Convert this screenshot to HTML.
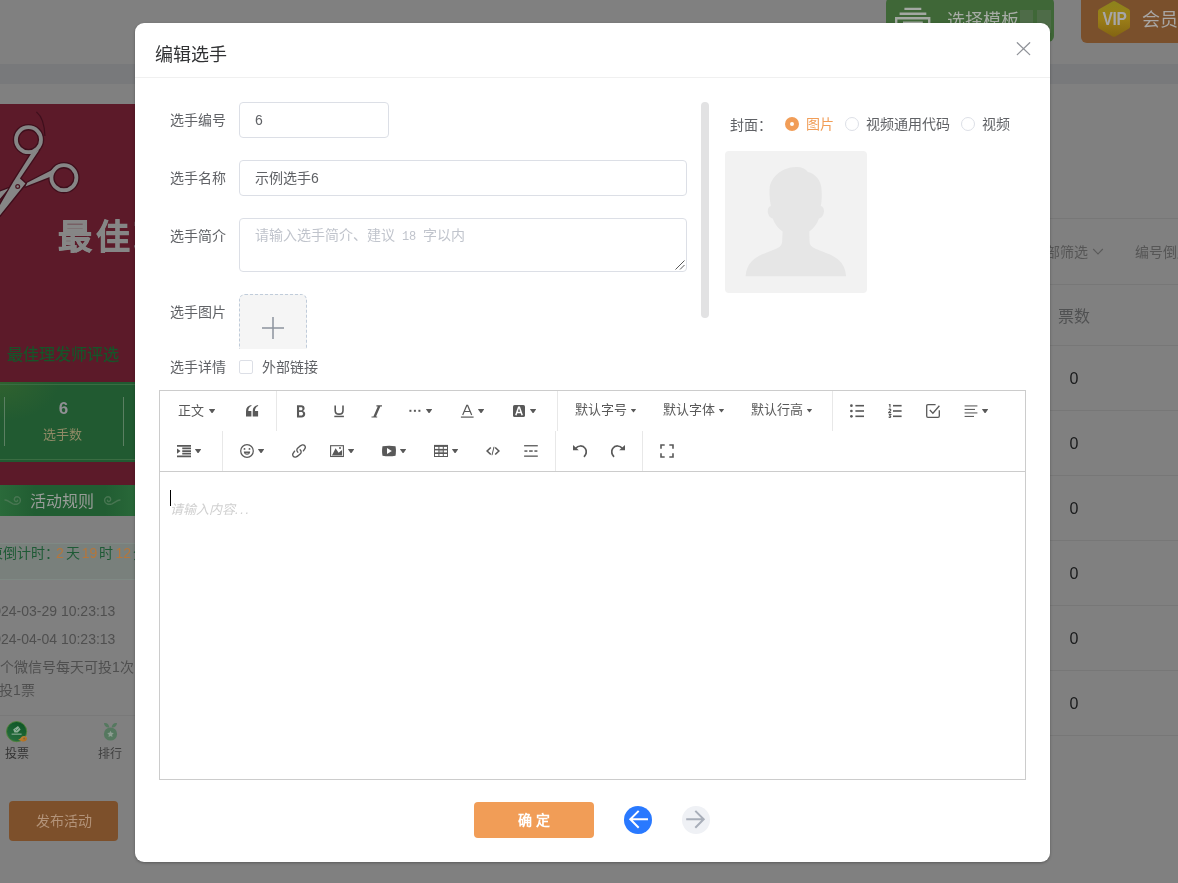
<!DOCTYPE html>
<html lang="zh-CN">
<head>
<meta charset="utf-8">
<title>编辑选手</title>
<style>
*{box-sizing:border-box;margin:0;padding:0}
html,body{width:1178px;height:883px;overflow:hidden;background:#808080;font-family:"Liberation Sans",sans-serif;}
.abs{position:absolute}
#bg{position:absolute;left:0;top:0;width:1178px;height:883px;overflow:hidden;background:#808080}
#bg div,#bg span,#bg svg{position:absolute}
.t{white-space:nowrap;line-height:1}
/* modal */
#modal{position:absolute;left:135px;top:23px;width:915px;height:839px;background:#fff;border-radius:9px;box-shadow:0 1px 3px rgba(0,0,0,.3)}
#modal div,#modal span,#modal svg{position:absolute}
.lbl{font-size:14px;color:#606266;white-space:nowrap;line-height:14px}
.inp{border:1px solid #dcdfe6;border-radius:4px;background:#fff}
.tbt{color:#595959}
</style>
</head>
<body>
<div id="bg"><div id="bgl" style="left:0;top:0;width:1178px;height:883px;will-change:transform">
<!-- BG-TOP -->
<div style="left:0;top:64px;width:1178px;height:20px;background:#78797b"></div>
<div style="left:886px;top:-3px;width:168px;height:45px;border-radius:6px;background:#3f6737"></div>
<svg style="left:892px;top:4px" width="42" height="30" viewBox="0 0 42 30"><path fill="none" stroke="#a3a8a2" stroke-width="2.4" d="M12.4 4.9 H29.3 M7.6 9.8 H34.3 M4.2 30 V14.3 H37.2 V30 M11 18.6 H30.8"/></svg>
<div class="t" style="left:947px;top:11.5px;font-size:18px;line-height:18px;color:#a7aca5">选择模板</div>
<div style="left:1019.5px;top:10px;width:13.3px;height:23px;background:#4e6c48"></div>
<div style="left:1037.4px;top:10px;width:13.4px;height:23px;background:#4e6c48"></div>
<div style="left:1081px;top:-10px;width:110px;height:53px;border-radius:6px;background:#7a502c"></div>
<svg style="left:1097px;top:0px" width="34" height="38" viewBox="0 0 34 38"><defs><linearGradient id="hx" x1="0" y1="0" x2="0" y2="1"><stop offset="0" stop-color="#8c831c"/><stop offset="0.5" stop-color="#9b7e18"/><stop offset="1" stop-color="#836412"/></linearGradient></defs><path fill="url(#hx)" d="M15.6 1.4 Q17 0.6 18.4 1.4 L31.6 9 Q33 9.8 33 11.4 V26.4 Q33 28 31.6 28.8 L18.4 36.4 Q17 37.2 15.6 36.4 L2.4 28.8 Q1 28 1 26.4 V11.4 Q1 9.8 2.4 9 Z"/></svg>
<div class="t" style="left:1100px;top:9.5px;width:29px;text-align:center;font-size:18px;line-height:18px;font-weight:bold;color:#a6a6a9;letter-spacing:-0.4px;transform:scaleX(.86)">VIP</div>
<div class="t" style="left:1142px;top:10.5px;font-size:18px;line-height:18px;color:#a8a6a4">会员</div>
<!-- /BG-TOP -->
<!-- BG-LEFT -->
<div style="left:0;top:104px;width:140px;height:412px;background:#5c1a29"></div>
<svg style="left:0;top:104px" width="140" height="130" viewBox="0 104 140 130">
 <path fill="none" stroke="#3e0f1c" stroke-width="1.2" d="M36.4 111.9 C41.5 116 44.5 122 44.9 136"/>
 <g fill="none" stroke="#3e0f1c" stroke-width="6.4" stroke-linejoin="round"><circle cx="28.5" cy="139.7" r="12.5"/><circle cx="63.9" cy="177.7" r="12.5"/></g>
 <path fill="#3e0f1c" stroke="#3e0f1c" stroke-width="2.6" stroke-linejoin="round" d="M31.1 153.8 L39.2 150 L19.9 178.4 L25.4 183.6 L-2 217.7 L-2 208.4 L13.6 181.4 Z M53 169.6 L51 176.5 L25.4 186.5 L27.2 182.8 Z M8.8 188.3 L-2 192.3 L-2 201.2 Z"/>
 <g fill="none" stroke="#868686" stroke-width="3.8"><circle cx="28.5" cy="139.7" r="12.5"/><circle cx="63.9" cy="177.7" r="12.5"/></g>
 <path fill="#868686" d="M53 169.6 L51 176.5 L25.4 186.5 L27.2 182.8 Z M8.8 188.3 L-2 192.3 L-2 201.2 Z"/>
 <path fill="#3e0f1c" stroke="#3e0f1c" stroke-width="2.2" stroke-linejoin="round" d="M19.9 178.4 L25.4 183.6 L-2 217.7 L-2 208.4 L13.6 181.4 Z"/>
 <path fill="#868686" d="M31.1 153.8 L39.2 150 L19.9 178.4 L25.4 183.6 L-2 217.7 L-2 208.4 L13.6 181.4 Z"/>
 <circle cx="17.7" cy="186.5" r="2.5" fill="#4a1421"/><circle cx="17.7" cy="186.5" r="1.2" fill="#868686"/>
</svg>
<div class="t" style="left:57.5px;top:217px;font-size:34px;line-height:40px;font-weight:900;color:#868686;letter-spacing:4px;-webkit-text-stroke:0.7px #868686">最佳理发师</div>
<div class="t" style="left:7px;top:347.4px;font-size:16px;line-height:16px;color:#17552a;-webkit-text-stroke:0.25px #17552a">最佳理发师评选</div>
<div style="left:0;top:382px;width:140px;height:80px;background:#215a31"></div>
<div style="left:0;top:382px;width:60px;height:40px;background:radial-gradient(ellipse at 0 0,#30622f 0,#215a31 70%)"></div>
<div style="left:0;top:384px;width:140px;height:1px;background:#3a6c42"></div>
<div style="left:0;top:459px;width:140px;height:1px;background:#3a6c42"></div>
<div style="left:4px;top:397px;width:1px;height:49px;background:#5b7f62"></div>
<div style="left:123px;top:397px;width:1px;height:49px;background:#5b7f62"></div>
<div class="t" style="left:33.5px;top:400px;width:60px;text-align:center;font-size:17px;line-height:18px;font-weight:bold;color:#909094">6</div>
<div class="t" style="left:32.7px;top:428.4px;width:60px;text-align:center;font-size:13px;line-height:14px;color:#8f8a66">选手数</div>
<div style="left:0;top:485px;width:140px;height:31.4px;background:linear-gradient(90deg,#2a6a3a 0,#215d32 25%,#215d32 75%,#2a6a3a 100%)"></div>
<div class="t" style="left:30px;top:494px;font-size:16px;line-height:16px;color:#999d99">活动规则</div>
<svg style="left:4px;top:494px" width="20" height="14" viewBox="0 0 20 14"><path fill="none" stroke="#487652" stroke-width="1.4" stroke-linecap="round" d="M1 6 C4 6 6 8.5 9 9.8 C12 11 16 10 16.4 7 C16.8 4 14 2 11.8 3 C9.8 4 9.8 6.6 11.6 7.4 C12.6 7.8 13.6 7.2 13.6 6.2"/></svg>
<svg style="left:101.2px;top:494px" width="20" height="14" viewBox="0 0 20 14"><path transform="translate(20 0) scale(-1 1)" fill="none" stroke="#487652" stroke-width="1.4" stroke-linecap="round" d="M1 6 C4 6 6 8.5 9 9.8 C12 11 16 10 16.4 7 C16.8 4 14 2 11.8 3 C9.8 4 9.8 6.6 11.6 7.4 C12.6 7.8 13.6 7.2 13.6 6.2"/></svg>
<div style="left:0;top:516px;width:140px;height:367px;background:#808080"></div>
<div style="left:0;top:543px;width:140px;height:37px;background:#79807c;border-top:1px solid #7f8984;border-bottom:1px solid #7f8984"></div>
<div class="t" style="left:-11px;top:546px;font-size:14px;line-height:15px;color:#1f5a36">束倒计时：<span style="position:static;color:#b4763c;margin-left:-3px">2</span><span style="position:static;margin:0 2px">天</span><span style="position:static;color:#b4763c">19</span><span style="position:static;margin:0 2px">时</span><span style="position:static;color:#b4763c">12</span><span style="position:static;margin:0 2px">分</span></div>
<div class="t" style="left:-14.6px;top:604px;font-size:14px;line-height:14px;color:#4f4f4f">2024-03-29 10:23:13</div>
<div class="t" style="left:-14.6px;top:632px;font-size:14px;line-height:14px;color:#4f4f4f">2024-04-04 10:23:13</div>
<div class="t" style="left:0px;top:660px;font-size:14px;line-height:14px;color:#4f4f4f">个微信号每天可投1次</div>
<div class="t" style="left:-1px;top:683px;font-size:14px;line-height:14px;color:#4f4f4f">投1票</div>
<div style="left:0;top:715px;width:140px;height:1px;background:#797979"></div>
<svg style="left:5px;top:720px" width="26" height="24" viewBox="0 0 26 24"><defs><linearGradient id="vg" x1="0.7" y1="0" x2="0.2" y2="1"><stop offset="0" stop-color="#0d5526"/><stop offset="1" stop-color="#2a7040"/></linearGradient><linearGradient id="og" x1="0" y1="0" x2="1" y2="1"><stop offset="0" stop-color="#c08a3c"/><stop offset="1" stop-color="#b06a1c"/></linearGradient></defs><circle cx="11.6" cy="11.6" r="10.1" fill="url(#vg)" stroke="#4f8238" stroke-width="0.9"/><path fill="#8fae98" d="M8.2 9.4 L13 6 L15.6 9.6 L12.6 12.6 H9.4 Z"/><path fill="none" stroke="#2e7a45" stroke-width="0.9" d="M10.4 9.4 L11.7 10.6 L13.6 8.4"/><rect x="6.6" y="13.6" width="10" height="1.1" fill="#8fae98"/><path fill="url(#og)" d="M13 19.6 C15 19.6 15.6 17.6 17 16.6 C19 15.2 22 16.2 22 18.6 C22 20.8 19.6 21.8 17.4 21.4 C15.4 21.2 14.6 20.2 13 19.6 Z"/><circle cx="19.2" cy="18.6" r="1" fill="#7d6a3a"/></svg>
<div class="t" style="left:5px;top:748px;font-size:12px;line-height:12px;color:#333">投票</div>
<svg style="left:102px;top:722px" width="17" height="19" viewBox="0 0 17 19"><path fill="#55785f" d="M2 1 C5 0.4 7 2.2 7.4 5.4 C4.4 5.8 2.2 4.2 2 1 Z M15 1 C12 0.4 10 2.2 9.6 5.4 C12.6 5.8 14.8 4.2 15 1 Z"/><circle cx="8.5" cy="12" r="6.6" fill="#55785f"/><path fill="#8c9d91" d="M8.5 8.7 L9.5 10.8 L11.8 11.1 L10.1 12.7 L10.5 15 L8.5 13.9 L6.5 15 L6.9 12.7 L5.2 11.1 L7.5 10.8 Z"/></svg>
<div class="t" style="left:98px;top:748px;font-size:12px;line-height:12px;color:#404040">排行</div>
<div style="left:9px;top:801px;width:109px;height:40px;border-radius:4px;background:#7d502b"></div>
<div class="t" style="left:9px;top:814px;width:109px;text-align:center;font-size:14px;line-height:14px;color:#b39379">发布活动</div>
<!-- /BG-LEFT -->
<!-- BG-RIGHT -->
<div style="left:1045px;top:218px;width:140px;height:1px;background:#777"></div>
<div style="left:1045px;top:284px;width:140px;height:1px;background:#777"></div>
<div style="left:1045px;top:345px;width:140px;height:1px;background:#777"></div>
<div style="left:1045px;top:410px;width:140px;height:1px;background:#777"></div>
<div style="left:1045px;top:475px;width:140px;height:1px;background:#777"></div>
<div style="left:1045px;top:540px;width:140px;height:1px;background:#777"></div>
<div style="left:1045px;top:605px;width:140px;height:1px;background:#777"></div>
<div style="left:1045px;top:670px;width:140px;height:1px;background:#777"></div>
<div style="left:1045px;top:735px;width:140px;height:1px;background:#777"></div>
<div class="t" style="left:1069.5px;top:371px;font-size:16px;line-height:16px;color:#191a1b">0</div>
<div class="t" style="left:1069.5px;top:436px;font-size:16px;line-height:16px;color:#191a1b">0</div>
<div class="t" style="left:1069.5px;top:501px;font-size:16px;line-height:16px;color:#191a1b">0</div>
<div class="t" style="left:1069.5px;top:566px;font-size:16px;line-height:16px;color:#191a1b">0</div>
<div class="t" style="left:1069.5px;top:631px;font-size:16px;line-height:16px;color:#191a1b">0</div>
<div class="t" style="left:1069.5px;top:696px;font-size:16px;line-height:16px;color:#191a1b">0</div>
<div class="t" style="left:1046px;top:245px;font-size:14px;line-height:14px;color:#565656">部筛选</div>
<svg style="left:1092px;top:247px" width="12" height="9" viewBox="0 0 12 9"><path fill="none" stroke="#5a5a5a" stroke-width="1.1" d="M1.2 2 L6 7 L10.8 2"/></svg>
<div class="t" style="left:1135px;top:245px;font-size:14px;line-height:14px;color:#565656">编号倒序</div>
<div class="t" style="left:1058px;top:309px;font-size:16px;line-height:16px;color:#505152">票数</div>
<!-- /BG-RIGHT -->
</div></div>
<div id="modal"><div id="mdl" style="left:0;top:0;width:915px;height:839px;will-change:transform">
<!-- HEADER -->
<div class="t" style="left:20px;top:23px;font-size:18px;line-height:18px;color:#303133">编辑选手</div>
<div style="left:0;top:54px;width:915px;height:1px;background:#f0f0f0"></div>
<svg style="left:881px;top:18px" width="16" height="16" viewBox="0 0 16 16"><path d="M1.3 1.7 L13.7 13.6 M13.7 1.7 L1.3 13.6" stroke="#909399" stroke-width="1.3" fill="none" stroke-linecap="round"/></svg>
<!-- FORM -->
<div id="scrollbox" style="left:24px;top:72px;width:560px;height:254px;overflow:hidden">
  <div class="lbl" style="left:11px;top:18px">选手编号</div>
  <div class="inp" style="left:80px;top:7px;width:150px;height:36px"></div>
  <div class="lbl" style="left:96px;top:18px">6</div>
  <div class="lbl" style="left:11px;top:76px">选手名称</div>
  <div class="inp" style="left:80px;top:65px;width:448px;height:36px"></div>
  <div class="lbl" style="left:96px;top:76px">示例选手6</div>
  <div class="lbl" style="left:11px;top:134px">选手简介</div>
  <div class="inp" style="left:80px;top:123px;width:448px;height:54px"></div>
  <div class="lbl" style="left:96px;top:133px;color:#c0c4cc">请输入选手简介、建议<span style="position:static;font-family:'Liberation Mono',monospace;font-size:12px;letter-spacing:-0.2px;white-space:pre"> 18 </span>字以内</div>
  <svg style="left:515px;top:164px" width="11" height="11" viewBox="0 0 11 11"><path d="M1.5 10.5 L10.5 1.5 M6 10.5 L10.5 6" stroke="#5a5a5a" stroke-width="1" fill="none"/></svg>
  <div class="lbl" style="left:11px;top:210px">选手图片</div>
  <div style="left:80px;top:199px;width:68px;height:68px;border:1px dashed #c0ccda;border-radius:6px;background:#f5f5f5"></div>
  <svg style="left:102px;top:221px" width="24" height="24" viewBox="0 0 24 24"><path d="M12 1 V23 M1 12 H23" stroke="#8c939d" stroke-width="1.5" fill="none"/></svg>
</div>
<div style="left:566px;top:79px;width:8px;height:216px;border-radius:4px;background:#e2e2e3"></div>
<div class="lbl" style="left:35px;top:337px">选手详情</div>
<div style="left:104px;top:337px;width:14px;height:14px;border:1px solid #dcdfe6;border-radius:2px;background:#fff"></div>
<div class="lbl" style="left:127px;top:337px">外部链接</div>
<!-- COVER -->
<div class="lbl" style="left:595px;top:95px">封面：</div>
<div style="left:650px;top:94px;width:14px;height:14px;border-radius:50%;background:#f19d57"></div>
<div style="left:655px;top:99px;width:4px;height:4px;border-radius:50%;background:#fff"></div>
<div class="lbl" style="left:671px;top:94px;color:#f19d57">图片</div>
<div style="left:710px;top:94px;width:14px;height:14px;border-radius:50%;border:1px solid #dcdfe6;background:#fff"></div>
<div class="lbl" style="left:731px;top:94px">视频通用代码</div>
<div style="left:826px;top:94px;width:14px;height:14px;border-radius:50%;border:1px solid #dcdfe6;background:#fff"></div>
<div class="lbl" style="left:847px;top:94px">视频</div>
<div style="left:590px;top:128px;width:142px;height:142px;border-radius:4px;background:#f2f2f2;overflow:hidden">
<svg style="left:0;top:0" width="142" height="142" viewBox="0 0 142 142"><path fill="#e6e6e6" d="M70.9 16.1 C76 15.8 80 17.5 82.9 21 C90 22.5 96 29 96.5 38 C97 44 96.8 50 95.8 55 C98.5 55.5 99.6 59 98.6 62.5 C97.8 65.5 96 67.2 94 67.5 C92 73 88.5 77.5 84.3 80.5 L84.5 90 C84.6 94 86.5 96 90 97.5 C98 101 107 103.5 112.5 108 C118 112.5 120.5 118 121.1 125.3 L20.6 125.3 C21.2 118 23.7 112.5 29.2 108 C34.7 103.5 43.7 101 51.7 97.5 C55.2 96 57.1 94 57.2 90 L57.6 80.5 C53.2 77.5 49.7 73 47.7 67.5 C45.7 67.2 43.9 65.5 43.1 62.5 C42.1 59 43.2 55.5 45.9 55 C44.9 50 44.2 44 44.6 38 C45.2 27 56 16.5 70.9 16.1 Z"/></svg>
</div>
<!-- EDITOR -->
<div style="left:24px;top:367px;width:867px;height:390px;border:1px solid #ccc;background:#fff"></div>
<div style="left:25px;top:448px;width:865px;height:1px;background:#ccc"></div>
<div class="t tbt" style="left:43px;top:380.5px;font-size:13px;line-height:14px">正文</div>
<svg style="left:73.90px;top:386.00px" width="6.20" height="4.40" viewBox="0 0 62 44"><path fill="#595959" d="M4 0 H58 Q64 0 60.5 5 L34 42 Q31 46 28 42 L1.5 5 Q-2 0 4 0 Z"/></svg>
<svg style="left:110px;top:381px" width="14" height="14" viewBox="0 0 14 14"><path fill="#595959" d="M1 12.6 V7.4 C1 3.8 2.9 1.6 6.4 1.1 V2 C4.2 2.9 3.3 4.7 3.3 7 H6.4 V12.6 Z M7.7 12.6 V7.4 C7.7 3.8 9.6 1.6 13.1 1.1 V2 C10.9 2.9 10 4.7 10 7 H13.1 V12.6 Z"/></svg>
<div style="left:141px;top:368px;width:1px;height:40px;background:#e8e8e8"></div>
<svg style="left:159px;top:381px" width="14" height="14" viewBox="0 0 14 14"><path transform="translate(0.85 0) scale(0.885 1)" fill="#595959" fill-rule="evenodd" d="M2.4 1.3 H7 C9.6 1.3 11 2.4 11 4.3 C11 5.7 10.2 6.6 9 6.95 C10.7 7.3 11.7 8.4 11.7 10 C11.7 12.2 10.1 13.5 7.4 13.5 H2.4 Z M4.8 3.2 V6.2 H6.8 C8 6.2 8.6 5.65 8.6 4.65 C8.6 3.65 8 3.2 6.7 3.2 Z M4.8 8 V11.6 H7.1 C8.5 11.6 9.2 10.95 9.2 9.8 C9.2 8.65 8.5 8 7 8 Z"/></svg>
<svg style="left:197px;top:381px" width="14" height="14" viewBox="0 0 14 14"><path fill="none" stroke="#595959" stroke-width="1.6" d="M3.2 1.4 V6.4 C3.2 8.8 4.7 10.1 7.1 10.1 C9.5 10.1 11 8.8 11 6.4 V1.4"/><rect x="2.3" y="11.7" width="9.6" height="1.5" fill="#595959"/></svg>
<svg style="left:235px;top:381px" width="14" height="14" viewBox="0 0 14 14"><path fill="#595959" d="M6.4 1.3 H12 V2.4 H10.35 L6.0 12.4 H7.2 V13.5 H1.5 V12.4 H3.4 L7.75 2.4 H6.4 Z"/></svg>
<svg style="left:273px;top:381px" width="14" height="14" viewBox="0 0 14 14"><rect x="1.4" y="5.8" width="2" height="2" fill="#595959"/><rect x="5.9" y="5.8" width="2" height="2" fill="#595959"/><rect x="10.4" y="5.8" width="2" height="2" fill="#595959"/></svg>
<svg style="left:290.90px;top:386.00px" width="6.20" height="4.40" viewBox="0 0 62 44"><path fill="#595959" d="M4 0 H58 Q64 0 60.5 5 L34 42 Q31 46 28 42 L1.5 5 Q-2 0 4 0 Z"/></svg>
<svg style="left:325px;top:381px" width="14" height="14" viewBox="0 0 14 14"><path fill="none" stroke="#595959" stroke-width="1.2" d="M2.7 10.9 L6.75 1.4 H7.65 L11.7 10.9 M4.2 7.5 H10.2"/><rect x="0.9" y="12.5" width="12.7" height="1.2" fill="#595959"/></svg>
<svg style="left:342.90px;top:386.00px" width="6.20" height="4.40" viewBox="0 0 62 44"><path fill="#595959" d="M4 0 H58 Q64 0 60.5 5 L34 42 Q31 46 28 42 L1.5 5 Q-2 0 4 0 Z"/></svg>
<svg style="left:377px;top:381px" width="14" height="14" viewBox="0 0 14 14"><rect x="1" y="1" width="12" height="12" rx="1.6" fill="#595959"/><path fill="none" stroke="#fff" stroke-width="1.5" d="M3.8 11.2 L6.6 3.2 H7.4 L10.2 11.2 M4.9 8.4 H9.1"/></svg>
<svg style="left:394.90px;top:386.00px" width="6.20" height="4.40" viewBox="0 0 62 44"><path fill="#595959" d="M4 0 H58 Q64 0 60.5 5 L34 42 Q31 46 28 42 L1.5 5 Q-2 0 4 0 Z"/></svg>
<div style="left:422px;top:368px;width:1px;height:40px;background:#e8e8e8"></div>
<div class="t tbt" style="left:440px;top:380.2px;font-size:13px;line-height:14px">默认字号</div>
<svg style="left:496.02px;top:386.34px" width="4.96" height="3.52" viewBox="0 0 62 44"><path fill="#595959" d="M4 0 H58 Q64 0 60.5 5 L34 42 Q31 46 28 42 L1.5 5 Q-2 0 4 0 Z"/></svg>
<div class="t tbt" style="left:528px;top:380.2px;font-size:13px;line-height:14px">默认字体</div>
<svg style="left:584.22px;top:386.34px" width="4.96" height="3.52" viewBox="0 0 62 44"><path fill="#595959" d="M4 0 H58 Q64 0 60.5 5 L34 42 Q31 46 28 42 L1.5 5 Q-2 0 4 0 Z"/></svg>
<div class="t tbt" style="left:616px;top:380.2px;font-size:13px;line-height:14px">默认行高</div>
<svg style="left:672.12px;top:386.34px" width="4.96" height="3.52" viewBox="0 0 62 44"><path fill="#595959" d="M4 0 H58 Q64 0 60.5 5 L34 42 Q31 46 28 42 L1.5 5 Q-2 0 4 0 Z"/></svg>
<div style="left:697px;top:368px;width:1px;height:40px;background:#e8e8e8"></div>
<svg style="left:715px;top:381px" width="14" height="14" viewBox="0 0 14 14"><circle cx="1.4" cy="1.7" r="1.35" fill="#595959"/><rect x="5.4" y="0.8999999999999999" width="8.6" height="1.6" fill="#595959"/><circle cx="1.4" cy="7" r="1.35" fill="#595959"/><rect x="5.4" y="6.2" width="8.6" height="1.6" fill="#595959"/><circle cx="1.4" cy="12.3" r="1.35" fill="#595959"/><rect x="5.4" y="11.5" width="8.6" height="1.6" fill="#595959"/></svg>
<svg style="left:753px;top:381px" width="14" height="14" viewBox="0 0 14 14"><rect x="5" y="0.8999999999999999" width="8.6" height="1.6" fill="#595959"/><rect x="5" y="6.2" width="8.6" height="1.6" fill="#595959"/><rect x="5" y="11.5" width="8.6" height="1.6" fill="#595959"/><path fill="none" stroke="#595959" stroke-width="1.1" d="M0.9 0.9 L2 0.4 V3.6 M0.7 5.6 C1.3 4.8 3 5 2.8 6.2 C2.7 7 1.2 7.6 0.7 8.6 H3.1 M0.8 10.5 H2.8 L1.6 12 C3.2 12 3.3 13.9 0.7 13.5"/></svg>
<svg style="left:791px;top:381px" width="14" height="14" viewBox="0 0 14 14"><path fill="none" stroke="#595959" stroke-width="1.3" d="M9.6 0.7 H2 Q0.7 0.7 0.7 2 V12 Q0.7 13.3 2 13.3 H12 Q13.3 13.3 13.3 12 V6.2"/><path fill="none" stroke="#595959" stroke-width="1.3" d="M3.8 6 L6.9 9.2 L13.4 1.8"/></svg>
<svg style="left:829px;top:381px" width="14" height="14" viewBox="0 0 14 14"><rect x="0.6" y="1.4" width="12.8" height="1.05" fill="#595959"/><rect x="0.6" y="4.9" width="10.4" height="1.05" fill="#595959"/><rect x="0.6" y="8.4" width="12.8" height="1.05" fill="#595959"/><rect x="0.6" y="11.9" width="9.4" height="1.05" fill="#595959"/></svg>
<svg style="left:846.90px;top:386.00px" width="6.20" height="4.40" viewBox="0 0 62 44"><path fill="#595959" d="M4 0 H58 Q64 0 60.5 5 L34 42 Q31 46 28 42 L1.5 5 Q-2 0 4 0 Z"/></svg>
<svg style="left:42px;top:421px" width="14" height="14" viewBox="0 0 16 16"><path fill="#595959" d="M0 1h16v2h-16zM6 4h10v2h-10zM6 7h10v2h-10zM6 10h10v2h-10zM0 13h16v2h-16zM0 11v-6l4 3z"/></svg>
<svg style="left:59.90px;top:426.00px" width="6.20" height="4.40" viewBox="0 0 62 44"><path fill="#595959" d="M4 0 H58 Q64 0 60.5 5 L34 42 Q31 46 28 42 L1.5 5 Q-2 0 4 0 Z"/></svg>
<div style="left:87px;top:408px;width:1px;height:40px;background:#e8e8e8"></div>
<svg style="left:105px;top:421px" width="14" height="14" viewBox="0 0 14 14"><circle cx="7" cy="7" r="6.3" fill="none" stroke="#595959" stroke-width="1.25"/><circle cx="4.5" cy="4.9" r="0.95" fill="#595959"/><circle cx="9.5" cy="4.9" r="0.95" fill="#595959"/><path fill="#595959" d="M3.8 7.4 H10.2 C10.2 9.4 8.8 10.7 7 10.7 C5.2 10.7 3.8 9.4 3.8 7.4 Z"/><ellipse cx="7" cy="9.5" rx="1.7" ry="0.8" fill="#a0a0a0"/></svg>
<svg style="left:122.90px;top:426.00px" width="6.20" height="4.40" viewBox="0 0 62 44"><path fill="#595959" d="M4 0 H58 Q64 0 60.5 5 L34 42 Q31 46 28 42 L1.5 5 Q-2 0 4 0 Z"/></svg>
<svg style="left:157px;top:421px" width="14" height="14" viewBox="0 0 14 14"><g fill="none" stroke="#595959" stroke-width="1.35" stroke-linecap="round"><path d="M11.4 6.9 L12.9 4.6 C14 2.9 12.6 0.4 10.3 0.9 C9.4 1.1 6.5 3.4 5.6 4.3 C4.5 5.4 4.6 7.2 5.9 8.2"/><path d="M2.6 7.1 L1.1 9.4 C0 11.1 1.4 13.6 3.7 13.1 C4.6 12.9 7.5 10.6 8.4 9.7 C9.5 8.6 9.4 6.8 8.1 5.8"/></g></svg>
<svg style="left:195px;top:421px" width="14" height="14" viewBox="0 0 14 14"><rect x="0.6" y="1.7" width="12.8" height="10.8" fill="none" stroke="#595959" stroke-width="1.1"/><path fill="#595959" d="M1.9 11.4 L5.6 4.2 L8.6 8.7 L11.6 6.3 L12 6.6 V11.4 Z"/><circle cx="10" cy="4.1" r="1" fill="#595959"/></svg>
<svg style="left:212.90px;top:426.00px" width="6.20" height="4.40" viewBox="0 0 62 44"><path fill="#595959" d="M4 0 H58 Q64 0 60.5 5 L34 42 Q31 46 28 42 L1.5 5 Q-2 0 4 0 Z"/></svg>
<svg style="left:247px;top:421px" width="14" height="14" viewBox="0 0 14 14"><path fill="#595959" d="M0.5 2.3 Q7 1.3 13.5 2.3 Q14.4 7 13.5 11.7 Q7 12.7 0.5 11.7 Q-0.4 7 0.5 2.3 Z"/><path fill="#fff" d="M5 3.9 L9.8 7 L5 10.1 Z"/></svg>
<svg style="left:264.90px;top:426.00px" width="6.20" height="4.40" viewBox="0 0 62 44"><path fill="#595959" d="M4 0 H58 Q64 0 60.5 5 L34 42 Q31 46 28 42 L1.5 5 Q-2 0 4 0 Z"/></svg>
<svg style="left:299px;top:421px" width="14" height="14" viewBox="0 0 14 14"><rect x="0" y="0.9" width="14" height="12.1" fill="#595959"/><rect x="1" y="2.9" width="3.4" height="2" fill="#fff"/><rect x="5.4" y="2.9" width="3.4" height="2" fill="#fff"/><rect x="9.8" y="2.9" width="3.2" height="2" fill="#fff"/><rect x="1" y="6.4" width="3.4" height="2" fill="#fff"/><rect x="5.4" y="6.4" width="3.4" height="2" fill="#d0d0d0"/><rect x="9.8" y="6.4" width="3.2" height="2" fill="#fff"/><rect x="1" y="10" width="3.4" height="2" fill="#fff"/><rect x="5.4" y="10" width="3.4" height="2" fill="#fff"/><rect x="9.8" y="10" width="3.2" height="2" fill="#fff"/></svg>
<svg style="left:316.90px;top:426.00px" width="6.20" height="4.40" viewBox="0 0 62 44"><path fill="#595959" d="M4 0 H58 Q64 0 60.5 5 L34 42 Q31 46 28 42 L1.5 5 Q-2 0 4 0 Z"/></svg>
<svg style="left:351px;top:421px" width="14" height="14" viewBox="0 0 14 14"><path fill="none" stroke="#595959" stroke-width="1.6" d="M4.8 3.5 L1.1 7 L4.8 10.5 M9.2 3.5 L12.9 7 L9.2 10.5"/><path fill="none" stroke="#595959" stroke-width="1" d="M8 2.8 L6 11.2"/></svg>
<svg style="left:389px;top:421px" width="14" height="14" viewBox="0 0 14 14"><rect x="0.1" y="1.1" width="13.7" height="1.3" fill="#595959"/><rect x="0.1" y="11.5" width="13.7" height="1.3" fill="#595959"/><rect x="0.4" y="6.3" width="3" height="1.5" fill="#595959"/><rect x="5.1" y="6.3" width="3.6" height="1.5" fill="#595959"/><rect x="10.4" y="6.3" width="3" height="1.5" fill="#595959"/></svg>
<div style="left:420px;top:408px;width:1px;height:40px;background:#e8e8e8"></div>
<svg style="left:438px;top:421px" width="14" height="14" viewBox="0 0 14 14"><path fill="none" stroke="#595959" stroke-width="1.7" d="M2.8 4.2 C4.8 1.6 9.8 0.8 12.2 4.4 C13.8 7 13.3 10.4 11 12.9"/><path fill="#595959" d="M0 0.9 L0 6.3 L5.8 6.3 Z"/></svg>
<svg style="left:476px;top:421px" width="14" height="14" viewBox="0 0 14 14"><g transform="translate(14 0) scale(-1 1)"><path fill="none" stroke="#595959" stroke-width="1.7" d="M2.8 4.2 C4.8 1.6 9.8 0.8 12.2 4.4 C13.8 7 13.3 10.4 11 12.9"/><path fill="#595959" d="M0 0.9 L0 6.3 L5.8 6.3 Z"/></g></svg>
<div style="left:507px;top:408px;width:1px;height:40px;background:#e8e8e8"></div>
<svg style="left:525px;top:421px" width="14" height="14" viewBox="0 0 14 14"><path fill="none" stroke="#595959" stroke-width="1.6" d="M1 4.7 V1 H4.7 M9.3 1 H13 V4.7 M13 9.3 V13 H9.3 M4.7 13 H1 V9.3"/></svg>
<div style="left:35px;top:467px;width:1px;height:16px;background:#000"></div>
<div class="t" style="left:35px;top:479.6px;font-size:13px;line-height:14px;font-style:italic;color:#d0d0d0">请输入内容<span style="position:static;letter-spacing:1.7px">...</span></div>
<!-- /EDITOR -->
<!-- FOOTER -->
<div style="left:339px;top:779px;width:120px;height:36px;border-radius:4px;background:#f19d57"></div>
<div class="t" style="left:339px;top:790px;width:120px;text-align:center;font-size:14px;line-height:14px;color:#fff;font-weight:bold;word-spacing:0">确 定</div>
<div style="left:489px;top:783px;width:28px;height:28px;border-radius:50%;background:#2979ff"></div>
<svg style="left:489px;top:783px" width="28" height="28" viewBox="0 0 28 28"><path d="M24 13.3 H6.4 M14.7 4.9 L6.3 13.3 L14.7 21.7" stroke="#fff" stroke-width="2" fill="none"/></svg>
<div style="left:547px;top:783px;width:28px;height:28px;border-radius:50%;background:#eff1f5"></div>
<svg style="left:547px;top:783px" width="28" height="28" viewBox="0 0 28 28"><path d="M4.2 13.3 H21.6 M13.3 4.9 L21.7 13.3 L13.3 21.7" stroke="#a8aeb9" stroke-width="2" fill="none"/></svg>
</div></div>
</body>
</html>
